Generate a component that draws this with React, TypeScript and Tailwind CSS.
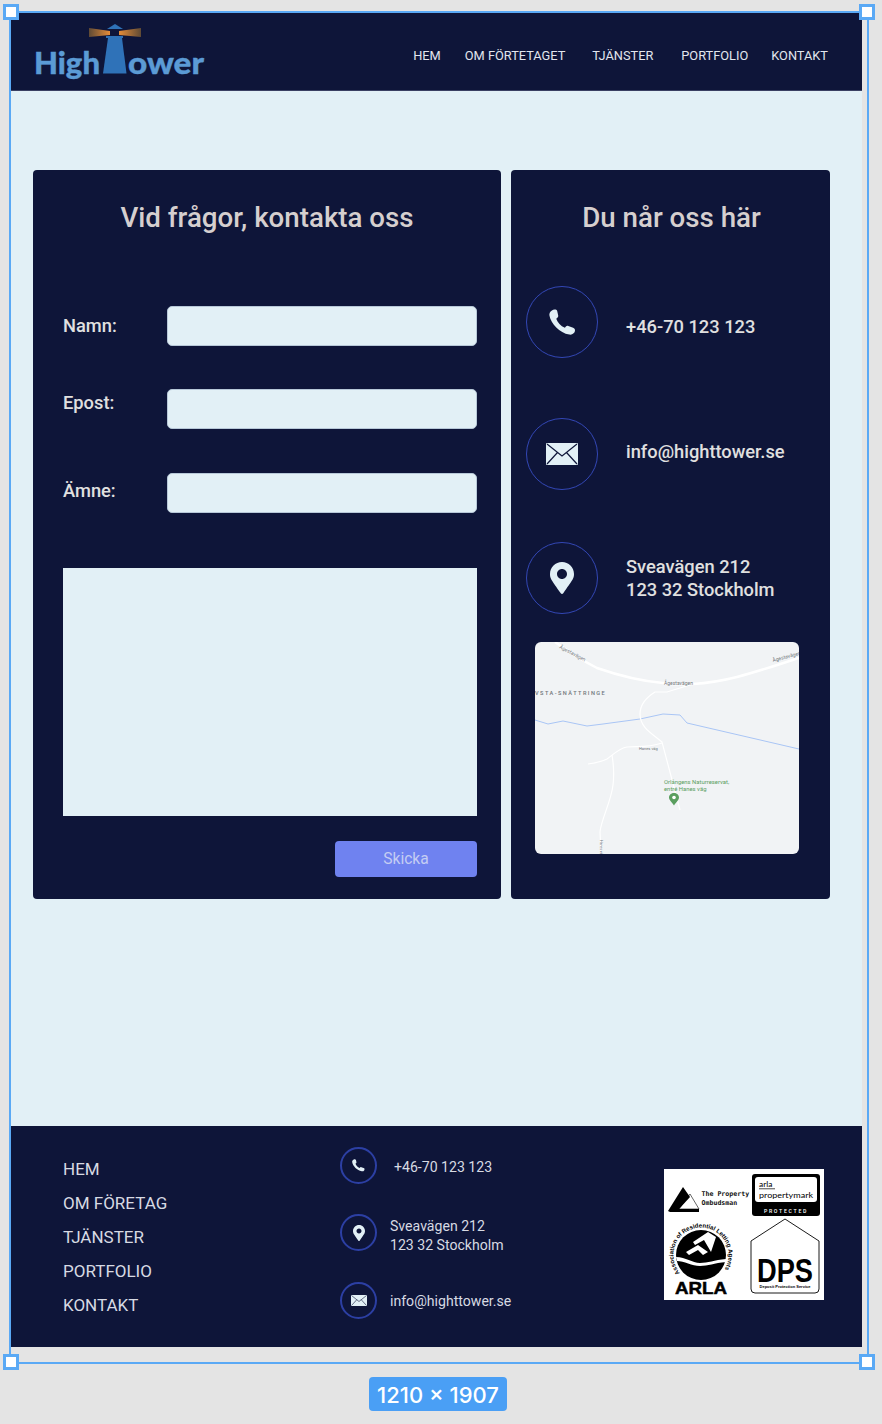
import React from 'react';
import { FaMapMarkerAlt } from 'react-icons/fa';

function Phone({ className }: { className?: string }) {
  return (
    <svg viewBox="0 0 28 28" className={className} fill="#e2f0f6">
      <path d="M3 1.5 C5 0 8 0.5 8.5 2 L9.5 6.5 C10 8 9 9 7.5 10 C9 14 12 17.5 16.5 19.5 C17.5 18 18.5 17 20 17.5 L25 19.5 C27 20 27.5 22.5 26.5 24 C25 26 23 27 21 26.5 C11 25 2 15 0.5 7 C0 4.5 1 3 3 1.5 Z" />
    </svg>
  );
}

function Envelope({ className }: { className?: string }) {
  return (
    <svg viewBox="0 0 32 22" className={className}>
      <rect x="0" y="0" width="32" height="22" rx="1" fill="#e2f0f6" />
      <path d="M1 1 L16 13 L31 1 M1 21 L11.5 9.5 M31 21 L20.5 9.5" fill="none" stroke="#0e1539" strokeWidth="1.2" />
    </svg>
  );
}

function IconCircle({ big, children }: { big?: boolean; children: React.ReactNode }) {
  return (
    <div
      className={
        big
          ? 'flex h-[72px] w-[72px] shrink-0 items-center justify-center rounded-full border border-[#3347b5]'
          : 'flex h-[37px] w-[37px] shrink-0 items-center justify-center rounded-full border-2 border-[#2c3fa3]'
      }
    >
      {children}
    </div>
  );
}

function Logo() {
  return (
    <svg width="200" height="78" viewBox="0 0 200 78" className="block">
      <defs>
        <linearGradient id="beamLeft" x1="0" x2="1" y1="0" y2="0">
          <stop offset="0" stopColor="#5f4a35" />
          <stop offset="1" stopColor="#e58c38" />
        </linearGradient>
        <linearGradient id="beamRight" x1="1" x2="0" y1="0" y2="0">
          <stop offset="0" stopColor="#5f4a35" />
          <stop offset="1" stopColor="#e58c38" />
        </linearGradient>
      </defs>
      <g transform="translate(-11 -13)">
        <path d="M89 28 L110 31 L110 35 L89 37 Z" fill="url(#beamLeft)" />
        <path d="M141 28 L119 31 L119 35 L141 37 Z" fill="url(#beamRight)" />
        <path d="M115 24 L123 29 L107 29 Z" fill="#2f72b8" />
        <rect x="106" y="36" width="17" height="2" fill="#2f72b8" />
        <path d="M108 38 L122 38 L126.5 73.5 L103 73.5 Z" fill="#2f72b8" />
        <g fontFamily="Lato, sans-serif" fontWeight="900" fontSize="31" fill="#5b9bd5" stroke="#5b9bd5" strokeWidth="0.4">
          <text x="34" y="74" textLength="66" lengthAdjust="spacingAndGlyphs">
            High
          </text>
          <text x="128" y="74" textLength="76" lengthAdjust="spacingAndGlyphs">
            ower
          </text>
        </g>
      </g>
    </svg>
  );
}

function MapPicture() {
  return (
    <svg viewBox="0 0 264 212" className="block h-[212px] w-[264px]">
      <rect width="264" height="212" fill="#f1f3f5" />
      <path d="M0 78 L13 82 L28 79 L52 84 L68 82 L105 77 L128 72 L145 73 L152 81 L264 107" fill="none" stroke="#a9c5f5" strokeWidth="1" />
      <path d="M20 0 C40 14 50 20 62 26 C85 34 105 39 128 41 C140 43 150 42 158 42 C175 41 190 38 202 35 C225 29 245 22 264 16" fill="none" stroke="#ffffff" strokeWidth="2.5" />
      <path d="M158 42 L132 50 L120 50 C112 55 105 62 105 72 C105 86 118 92 127 100 L145 168" fill="none" stroke="#ffffff" strokeWidth="1.2" />
      <path d="M127 101 C112 106 102 104 92 105 C85 106 80 111 72 117 C66 120 60 121 53 122" fill="none" stroke="#ffffff" strokeWidth="1.2" />
      <path d="M77 113 C79 125 79 135 78 143 C76 160 66 178 65 190 L66 212" fill="none" stroke="#ffffff" strokeWidth="1.2" />
      <g fontFamily="Roboto, sans-serif" fill="#70757a">
        <text x="24" y="6" fontSize="5" transform="rotate(28 24 6)">Ågestavägen</text>
        <text x="238" y="20" fontSize="5" transform="rotate(-15 238 20)">Ågestavägen</text>
        <text x="129" y="43" fontSize="5">Ågestavägen</text>
        <text x="0" y="53" fontSize="5.6" fontWeight="500" letterSpacing="1.45">VSTA-SNÄTTRINGE</text>
        <text x="104" y="108" fontSize="4">Hanes väg</text>
        <text x="65" y="198" fontSize="3.5" transform="rotate(90 65 198)">Hanes väg</text>
      </g>
      <g fontFamily="Roboto, sans-serif" fontSize="5.9" fill="#5a9e5f">
        <text x="129" y="142">Orlångens Naturreservat,</text>
        <text x="129" y="149">entré Hanes väg</text>
      </g>
      <path d="M139 151 C135.5 151 134 153.5 134 155.5 C134 158.5 137.5 160.5 139 163.5 C140.5 160.5 144 158.5 144 155.5 C144 153.5 142.5 151 139 151 Z" fill="#5a9e5f" />
      <circle cx="139" cy="155.5" r="1.8" fill="#ffffff" />
    </svg>
  );
}

function Badges() {
  return (
    <svg viewBox="0 0 160 131" className="block h-[131px] w-[160px]">
      <rect width="160" height="131" fill="#ffffff" />
      {/* ombudsman */}
      <path d="M4 42 L19 18 L26 28 L15 40 L35 40 L35 43 L6 43 Z" fill="#000000" />
      <path d="M15 40 L26 25 L35 40 Z" fill="none" stroke="#000000" strokeWidth="0.6" />
      <g fontFamily="'DejaVu Sans Mono', monospace" fontSize="6.6" fontWeight="700" fill="#111111">
        <text x="37.5" y="26.5">The Property</text>
        <text x="37.5" y="35.5">Ombudsman</text>
      </g>
      {/* propertymark */}
      <rect x="88" y="5" width="68" height="42" rx="3" fill="#000000" />
      <rect x="91" y="8" width="62" height="25" rx="3" fill="#ffffff" />
      <g fontFamily="Lato, sans-serif" fill="#000000" fontSize="8.4">
        <text x="95" y="17.5">arla</text>
        <rect x="95" y="19.5" width="16" height="0.7" />
        <text x="95" y="28.5" textLength="54" lengthAdjust="spacingAndGlyphs">propertymark</text>
      </g>
      <text x="122" y="44" textAnchor="middle" fontFamily="Roboto, sans-serif" fontSize="5.2" fontWeight="500" letterSpacing="1.7" fill="#ffffff">
        PROTECTED
      </text>
      {/* arla seal */}
      <circle cx="37" cy="86" r="25" fill="#000000" />
      <path d="M12 88 C22 88 28 94 36 94 C44 94 50 91 62 90 L62 93 C50 94 44 97 36 97 C28 97 20 92 13 92 Z" fill="#ffffff" />
      <path d="M29 73 L44 63 L52 68 L47 83 L40 71 L31 76 Z" fill="#ffffff" />
      <path d="M22 83 L34 76 L44 83 L39 86 L34 81 L25 86 Z" fill="#ffffff" />
      <defs>
        <path id="sealArc" d="M16 104 A27.6 27.6 0 1 1 58 104" />
      </defs>
      <text fontFamily="'Liberation Sans', sans-serif" fontWeight="700" fontSize="6.1" fill="#000000">
        <textPath href="#sealArc">Association of Residential Letting Agents</textPath>
      </text>
      <text x="11" y="125" fontFamily="'Liberation Sans', sans-serif" fontWeight="700" fontSize="17" textLength="52" lengthAdjust="spacingAndGlyphs" stroke="#000000" strokeWidth="0.5" fill="#000000">
        ARLA
      </text>
      {/* dps */}
      <path d="M121 50 L155 72 L155 120 Q155 124 151 124 L91 124 Q87 124 87 120 L87 72 Z" fill="#ffffff" stroke="#000000" strokeWidth="0.9" strokeLinejoin="round" />
      <text x="93" y="113" fontFamily="'Liberation Sans', sans-serif" fontWeight="700" fontSize="33" textLength="56" lengthAdjust="spacingAndGlyphs" fill="#000000">
        DPS
      </text>
      <text x="121" y="118.5" textAnchor="middle" fontFamily="'Liberation Sans', sans-serif" fontWeight="700" fontSize="4" fill="#000000">
        Deposit Protection Service
      </text>
    </svg>
  );
}

function Handle({ className }: { className: string }) {
  return <div className={`absolute h-4 w-4 border-[3px] border-[#5aa9f5] bg-white ${className}`} />;
}

export default function App() {
  return (
    <div className="relative h-[1424px] w-[882px] overflow-hidden bg-[#e4e4e4] pl-[11px] pt-[13px] font-['Roboto',sans-serif]">
      <div className="flex h-[1334px] w-[851px] flex-col">
        {/* Header */}
        <header className="flex h-[78px] shrink-0 items-start justify-between border-b border-[#3a4063] bg-[#0e1539]">
          <Logo />
          <nav className="mr-[34px] mt-[35px] flex text-[12.8px] leading-[16px] text-[#e2e6ee]">
            <span className="mr-[24px]">HEM</span>
            <span className="mr-[27px]">OM FÖRTETAGET</span>
            <span className="mr-[28px]">TJÄNSTER</span>
            <span className="mr-[23px]">PORTFOLIO</span>
            <span>KONTAKT</span>
          </nav>
        </header>

        {/* Main */}
        <main className="flex h-[1035px] shrink-0 items-start gap-[10px] bg-[#e2f0f6] pl-[22px] pt-[79px]">
          <section className="h-[729px] w-[468px] rounded bg-[#0e1539] pl-[30px] pr-[24px] pt-[30px]">
            <h2 className="-ml-[30px] -mr-[24px] text-center text-[27.7px] font-[480] leading-[36px] text-[#d5cfcf]">Vid frågor, kontakta oss</h2>
            <div className="mt-[70px] flex h-[40px] items-start">
              <label className="mt-[8px] w-[104px] text-[18.3px] font-[480] leading-[24px] text-[#e0e0e0]">Namn:</label>
              <input className="h-[40px] w-[310px] rounded-[5px] border border-[#b7c8d8] bg-[#e2f0f6]" />
            </div>
            <div className="mt-[43px] flex h-[40px] items-start">
              <label className="mt-[2px] w-[104px] text-[18.3px] font-[480] leading-[24px] text-[#e0e0e0]">Epost:</label>
              <input className="h-[40px] w-[310px] rounded-[5px] border border-[#b7c8d8] bg-[#e2f0f6]" />
            </div>
            <div className="mt-[44px] flex h-[40px] items-start">
              <label className="mt-[6px] w-[104px] text-[18.3px] font-[480] leading-[24px] text-[#e0e0e0]">Ämne:</label>
              <input className="h-[40px] w-[310px] rounded-[5px] border border-[#b7c8d8] bg-[#e2f0f6]" />
            </div>
            <textarea className="mt-[55px] block h-[248px] w-[414px] resize-none bg-[#e2f0f6]" />
            <div className="mt-[25px] flex justify-end">
              <button className="h-[36px] w-[142px] rounded-sm bg-[#6f82f0] pt-[1px] text-[15.6px] text-[#c4cdf3]">Skicka</button>
            </div>
          </section>

          <section className="h-[729px] w-[319px] rounded bg-[#0e1539] pt-[30px]">
            <h2 className="pl-[2px] text-center text-[27.7px] font-[480] leading-[36px] text-[#d5cfcf]">Du når oss här</h2>
            <div className="ml-[15px] mt-[50px] flex items-center gap-[28px]">
              <IconCircle big>
                <Phone className="h-[27px] w-[27px]" />
              </IconCircle>
              <span className="mt-[8px] text-[18.3px] font-[480] leading-[23px] text-[#e0e0e0]">+46-70 123 123</span>
            </div>
            <div className="ml-[15px] mt-[60px] flex items-center gap-[28px]">
              <IconCircle big>
                <Envelope className="h-[22px] w-[32px]" />
              </IconCircle>
              <span className="mb-[6px] text-[18.3px] font-[480] leading-[23px] text-[#e0e0e0]">info@highttower.se</span>
            </div>
            <div className="ml-[15px] mt-[52px] flex items-center gap-[28px]">
              <IconCircle big>
                <FaMapMarkerAlt className="h-[32px] w-[32px] text-[#e2f0f6]" />
              </IconCircle>
              <span className="text-[18.3px] font-[480] leading-[23px] text-[#e0e0e0]">
                Sveavägen 212
                <br />
                123 32 Stockholm
              </span>
            </div>
            <div className="ml-[24px] mt-[28px] h-[212px] w-[264px] overflow-hidden rounded-md">
              <MapPicture />
            </div>
          </section>
        </main>

        {/* Footer */}
        <footer className="flex h-[221px] shrink-0 bg-[#0e1539] pl-[52px]">
          <ul className="w-[277px] pt-[26px] text-[17px] leading-[34px] text-[#d7dae3]">
            <li>HEM</li>
            <li>OM FÖRETAG</li>
            <li>TJÄNSTER</li>
            <li>PORTFOLIO</li>
            <li>KONTAKT</li>
          </ul>
          <div className="pt-[21px] text-[14.1px] leading-[19px] text-[#d7dae3]">
            <div className="flex h-[37px] items-center gap-[17px]">
              <IconCircle>
                <Phone className="h-[13px] w-[13px]" />
              </IconCircle>
              <span className="mt-[4px]">+46-70 123 123</span>
            </div>
            <div className="mt-[30px] flex h-[37px] items-start gap-[13px]">
              <IconCircle>
                <FaMapMarkerAlt className="h-[16px] w-[16px] text-[#e2f0f6]" />
              </IconCircle>
              <span className="mt-[3px]">
                Sveavägen 212
                <br />
                123 32 Stockholm
              </span>
            </div>
            <div className="mt-[31px] flex h-[37px] items-center gap-[13px]">
              <IconCircle>
                <Envelope className="h-[11px] w-[16px]" />
              </IconCircle>
              <span className="mt-[2px]">info@highttower.se</span>
            </div>
          </div>
          <div className="ml-auto mr-[38px] pt-[43px]">
            <Badges />
          </div>
        </footer>
      </div>

      {/* selection frame */}
      <div className="absolute left-[9px] top-[11px] h-[1353px] w-[860px] border-2 border-[#5aa9f5]" />
      <Handle className="left-[3px] top-[4px]" />
      <Handle className="left-[859px] top-[4px]" />
      <Handle className="left-[3px] top-[1354px]" />
      <Handle className="left-[859px] top-[1354px]" />
      <div className="absolute left-[369px] top-[1377px] flex h-[34px] w-[138px] items-center justify-center rounded bg-[#4a9ff5] pt-[2px] font-['Inter',sans-serif] text-[22px] font-medium text-white">
        1210 × 1907
      </div>
    </div>
  );
}
